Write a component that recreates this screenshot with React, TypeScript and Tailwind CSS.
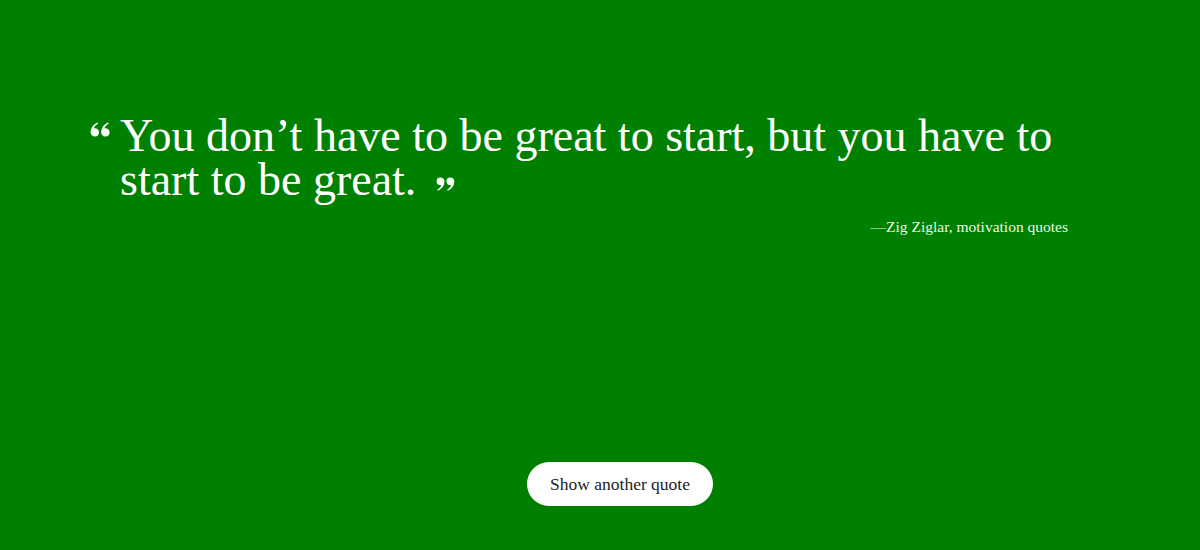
// comma-shaped mark used for both quote icons
const Comma = ({ x }: { x: number }) => (
  <path
    transform={`translate(${x} 0)`}
    d="M4.5 0.5A4.2 4.2 0 0 1 8.8 4.8C8.8 9.2 6.2 12.6 1.8 14.6L1.2 13.6C3.9 12 5.2 10.2 5.5 8.7A4.1 4.1 0 0 1 0.4 4.7A4.2 4.2 0 0 1 4.5 0.5Z"
  />
);

const CloseQuote = ({ className }: { className?: string }) => (
  <svg viewBox="0 0 20 15" className={className} fill="currentColor">
    <Comma x={0} />
    <Comma x={10.6} />
  </svg>
);

const OpenQuote = ({ className }: { className?: string }) => (
  <svg viewBox="0 0 20 15" className={className} fill="currentColor">
    <g transform="rotate(180 10 7.5)">
      <Comma x={0} />
      <Comma x={10.6} />
    </g>
  </svg>
);

const App = () => {
  return (
    <main
      className="bg-[#008000] h-[550px] w-full flex flex-col"
      style={{ fontFamily: '"Liberation Serif", "DejaVu Serif", serif' }}
    >
      <section className="w-[978px] mt-[114px] ml-[90px]">
        <div className="flex items-start text-white">
          <div className="w-[30px] shrink-0 pt-[8px]">
            <OpenQuote className="w-[20px] h-[15px]" />
          </div>
          <p className="text-[46px] leading-[44px]">
            You don&rsquo;t have to be great to start, but you have to start
            to be great.
            <CloseQuote className="inline-block w-[19px] h-[14px] ml-[20px] align-[4px]" />
          </p>
        </div>
        <p className="text-right text-[15.5px] text-[#eef5e6] mt-[13px]">
          &mdash;Zig Ziglar, motivation quotes
        </p>
      </section>

      <button className="self-center ml-[40px] mt-auto mb-[44px] h-[44px] px-[23px] rounded-full bg-white text-[#222] text-[17.5px]">
        Show another quote
      </button>
    </main>
  );
};

export default App;
